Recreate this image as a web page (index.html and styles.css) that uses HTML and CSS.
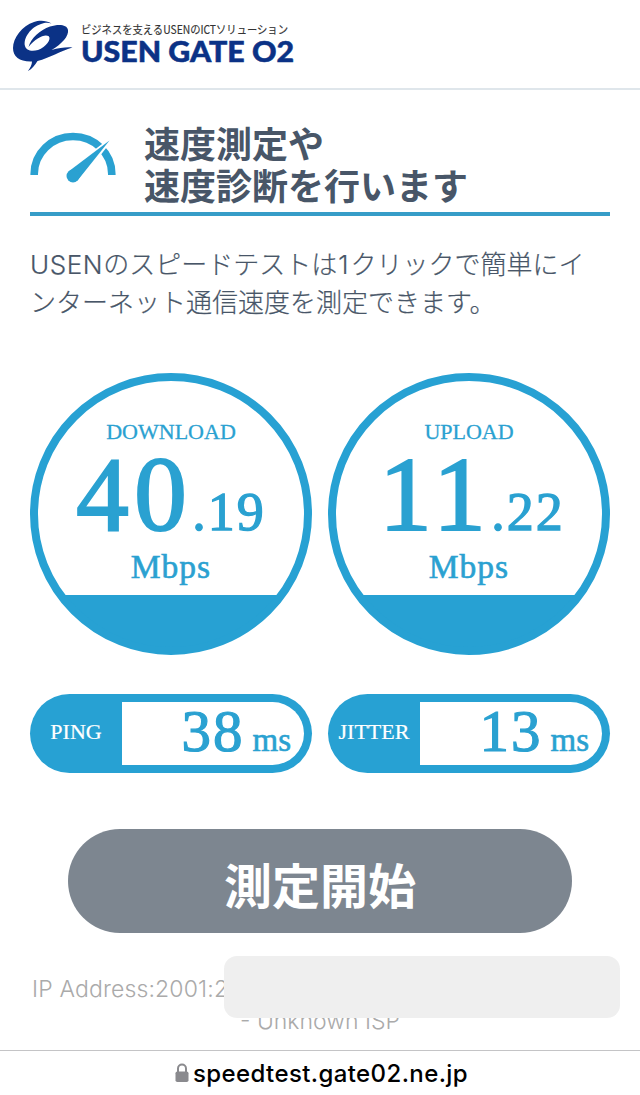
FILE: index.html
```html
<!DOCTYPE html>
<html lang="ja">
<head>
<meta charset="utf-8">
<title>USEN GATE 02 スピードテスト</title>
<link rel="stylesheet" href="styles.css">
</head>
<body>
<header class="header">
  <svg class="logo" width="300" height="66" viewBox="0 0 300 66" role="img">
    <path fill="#0b3286" d="M51.500 23.500C46 20 39 20 34 22C22 26 13 38 13 48C13 57 20 62 32 61.500C32 65 30 68 28 71C32 69 35 65 37.500 61C50 58 60 51 72.500 47.500C66 47 59 48 51.500 50C62 44 69 36 68 30C67 24 58 24 50 26.500C40 30 31 38 28.500 47C36 38 44 34 48.500 36C52 39 46 47 38 50C31 52 26 50 25 46C23 38 31 27 41 24C45 22.500 48 22.500 51.500 23.500Z"/>
    <text class="logo-tagline" x="81" y="34" textLength="207" lengthAdjust="spacingAndGlyphs">ビジネスを支えるUSENのICTソリューション</text>
    <text class="logo-name" x="81" y="62" textLength="213" lengthAdjust="spacingAndGlyphs">USEN GATE O2</text>
  </svg>
</header>
<main class="main">
  <div class="title">
    <svg class="meter" width="88" height="56" viewBox="0 0 88 56">
      <path d="M4.200 43V42A38.800 37.500 0 0 1 81.800 42V43" fill="none" stroke="#2aa1d1" stroke-width="7.600"/>
      <path d="M81 7L37 41L48 50Z" fill="#2aa1d1" stroke="#fff" stroke-width="3"/>
      <path d="M79.500 8.500L38.500 39.500L47.500 48.500Z" fill="#2aa1d1"/>
      <circle cx="43" cy="44" r="6.500" fill="#2aa1d1"/>
    </svg>
    <h1 class="heading">速度測定や<br>速度診断を行います</h1>
  </div>
  <p class="lead"><span class="latin">USEN</span>のスピードテストは<span class="digit">1</span>クリックで簡単にインターネット通信速度を測定できます。</p>
  <section class="gauges">
    <div class="gauge">
      <div class="gauge-label">DOWNLOAD</div>
      <div class="gauge-value"><span class="whole">40</span><span class="decimal">.19</span></div>
      <div class="gauge-unit">Mbps</div>
    </div>
    <div class="gauge">
      <div class="gauge-label">UPLOAD</div>
      <div class="gauge-value upload"><span class="whole">11</span><span class="decimal">.22</span></div>
      <div class="gauge-unit">Mbps</div>
    </div>
  </section>
  <section class="stats">
    <div class="stat"><span class="stat-label">PING</span><span class="stat-value"><b>38</b><i>ms</i></span></div>
    <div class="stat"><span class="stat-label">JITTER</span><span class="stat-value"><b>13</b><i>ms</i></span></div>
  </section>
  <button class="start">測定開始</button>
  <div class="network">
    <div class="ip">IP Address:2001:2</div>
    <div class="isp">- Unknown ISP</div>
    <div class="redaction"></div>
  </div>
</main>
<footer class="address-bar">
  <svg width="14" height="20" viewBox="0 0 14 20"><path d="M3 9V5.500a4 4 0 0 1 8 0V9" fill="none" stroke="#8a8a8e" stroke-width="2"/><rect x="0.500" y="8.500" width="13" height="10.500" rx="1.800" fill="#8a8a8e"/></svg>
  <span class="url">speedtest.gate02.ne.jp</span>
</footer>
</body>
</html>
```

FILE: styles.css
```css
* { box-sizing: border-box; }
body {
  margin: 0;
  width: 640px;
  height: 1095px;
  overflow: hidden;
  display: flex;
  flex-direction: column;
  background: #fff;
  color: #485668;
  font-family: Inter, "Noto Sans CJK JP", sans-serif;
}
.header { height: 90px; border-bottom: 2px solid #dfe6eb; }
.logo { display: block; overflow: visible; }
.logo-tagline { font: 400 11.5px "Noto Sans CJK JP", sans-serif; fill: #333; stroke: #333; stroke-width: .15px; }
.logo-name { font: 900 27.5px Lato, sans-serif; fill: #0b3286; stroke: #0b3286; stroke-width: .5px; }
.main { height: 960px; padding: 31px 30px 0; display: flex; flex-direction: column; }
.title { height: 95px; display: flex; border-bottom: 4px solid #369dc8; }
.meter { margin-top: 11px; }
.heading {
  margin: 0 0 0 26px;
  font: 700 36px/42px "Noto Sans CJK JP", sans-serif;
}
.lead { margin: 30px 0 0; font-size: 26px; line-height: 38px; font-weight: 300; width: 570px; -webkit-text-stroke: .2px; }
.latin { letter-spacing: .6px; }
.digit { padding: 0 2px 0 1px; }
.gauges, .stats { display: flex; justify-content: space-between; }
.gauges { margin-top: 51px; }
.gauge {
  width: 282px;
  height: 282px;
  padding-top: 38px;
  border: 8px solid #27a1d3;
  border-radius: 50%;
  background: linear-gradient(#fff 214px, #27a1d3 214px);
  background-origin: padding-box;
  color: #2aa1d1;
  text-align: center;
  font-family: "Liberation Serif", serif;
}
.gauge-label { font-size: 22px; line-height: 26px; -webkit-text-stroke: .3px; }
.gauge-value { height: 102px; line-height: 99px; white-space: nowrap; }
.upload { padding-left: 6px; }
.whole { font-size: 105px; letter-spacing: 5.5px; -webkit-text-stroke: 2.2px; }
.decimal { font-size: 54px; letter-spacing: 2px; -webkit-text-stroke: 1.3px; }
.gauge-unit { font-size: 33.5px; line-height: 40px; letter-spacing: 1px; -webkit-text-stroke: .6px; }
.stats { margin-top: 39px; font-family: "Liberation Serif", serif; }
.stat {
  width: 282px;
  height: 79px;
  padding: 8px 8px 8px 0;
  display: flex;
  border-radius: 40px;
  background: #27a1d3;
}
.stat-label { width: 92px; color: #fff; font-size: 22px; line-height: 59px; text-align: center; -webkit-text-stroke: .2px; }
.stat-value {
  flex: 1;
  padding-right: 13px;
  display: flex;
  justify-content: flex-end;
  align-items: baseline;
  gap: 8px;
  border-radius: 0 32px 32px 0;
  background: #fff;
  color: #2aa1d1;
}
.stat-value b { font-weight: 400; font-size: 59px; line-height: 58px; letter-spacing: 2px; -webkit-text-stroke: 1.2px; }
.stat-value i { font-style: normal; font-size: 33px; -webkit-text-stroke: .6px; }
.start {
  width: 504px;
  height: 104px;
  margin: 56px auto 0;
  padding: 3px 0 0;
  border: 0;
  border-radius: 52px;
  background: #7d8690;
  color: #fff;
  font: 700 48px/70px "Noto Sans CJK JP", sans-serif;
}
.network { position: relative; height: 117px; color: #aaa; font-size: 23px; font-weight: 300; line-height: 32px; }
.ip { padding: 40px 0 0 2px; letter-spacing: .15px; }
.isp { padding-left: 210px; }
.redaction {
  position: absolute;
  left: 194px;
  top: 23px;
  width: 396px;
  height: 62px;
  border-radius: 13px;
  background: #efefef;
}
.address-bar {
  height: 45px;
  padding-left: 3px;
  display: flex;
  justify-content: center;
  align-items: center;
  gap: 4px;
  border-top: 1px solid #c4c4c6;
  color: #000;
}
.url { font-size: 24px; font-weight: 500; letter-spacing: .4px; }
```
